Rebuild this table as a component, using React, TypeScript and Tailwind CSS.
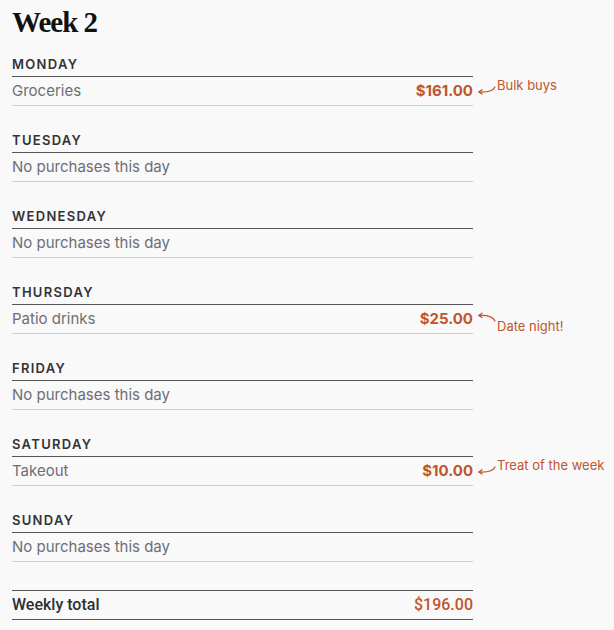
import React from "react";

type Day = {
  name: string;
  item?: string;
  amount?: string;
  note?: string;
  noteDir?: "up" | "down";
};

const days: Day[] = [
  { name: "Monday", item: "Groceries", amount: "$161.00", note: "Bulk buys", noteDir: "up" },
  { name: "Tuesday" },
  { name: "Wednesday" },
  { name: "Thursday", item: "Patio drinks", amount: "$25.00", note: "Date night!", noteDir: "down" },
  { name: "Friday" },
  { name: "Saturday", item: "Takeout", amount: "$10.00", note: "Treat of the week", noteDir: "up" },
  { name: "Sunday" },
];

function Note({ text, dir }: { text: string; dir: "up" | "down" }) {
  const up = dir === "up";
  return (
    <div className="absolute left-[465px] top-0 h-full w-[140px]">
      {/* arrow */}
      <svg
        width="20"
        height="14"
        viewBox="0 0 20 14"
        fill="none"
        stroke="#c0552b"
        strokeWidth="1.3"
        strokeLinecap="round"
        strokeLinejoin="round"
        className={up ? "absolute left-0 top-[6px]" : "absolute left-0 top-[5px]"}
      >
        {up ? (
          <>
            <path d="M18 4 C 16 8, 10 9.5, 2 9" />
            <path d="M5 6.8 L 1.8 9 L 5 11" />
          </>
        ) : (
          <>
            <path d="M18 11 C 16 7, 10 5, 2 5.5" />
            <path d="M5 3.3 L 1.8 5.5 L 5 7.5" />
          </>
        )}
      </svg>
      <span
        className={
          "absolute left-[20px] whitespace-nowrap text-[13px] leading-[16px] text-[#c0552b] " +
          (up ? "top-[0px]" : "top-[13px]")
        }
      >
        {text}
      </span>
    </div>
  );
}

export default function App() {
  return (
    <div
      className="min-h-[630px] bg-[#f9f9fa] pl-3"
      style={{ fontFamily: "Inter, 'Noto Sans', sans-serif" }}
    >
      <h1
        className="pt-2 mb-[20px] text-[29px] leading-[28px] font-bold tracking-[-1px] text-[#111]"
        style={{ fontFamily: "'Liberation Serif', serif" }}
      >
        Week 2
      </h1>

      <div className="w-[461px]">
        {days.map((d) => (
          <div key={d.name} className="mb-[26px]">
            <div className="pb-[4px] border-b border-[#555] text-[13px] leading-[16px] font-semibold uppercase tracking-[0.1em] text-[#333336]">
              {d.name}
            </div>
            <div className="relative flex items-center justify-between h-[29px] border-b border-[#cfcfd2] text-[15px]">
              <span className="text-[#6e6e72]">{d.item ?? "No purchases this day"}</span>
              {d.amount && <span className="font-bold text-[#c0552b]">{d.amount}</span>}
              {d.note && <Note text={d.note} dir={d.noteDir ?? "up"} />}
            </div>
          </div>
        ))}

        {/* Total */}
        <div
          className="mt-[28px] flex items-center justify-between h-[30px] border-y border-[#555] text-[16px] font-medium"
          style={{ fontFamily: "Roboto, sans-serif" }}
        >
          <span className="text-[#2f2f33]">Weekly total</span>
          <span className="text-[#c0552b]">$196.00</span>
        </div>
      </div>
    </div>
  );
}
